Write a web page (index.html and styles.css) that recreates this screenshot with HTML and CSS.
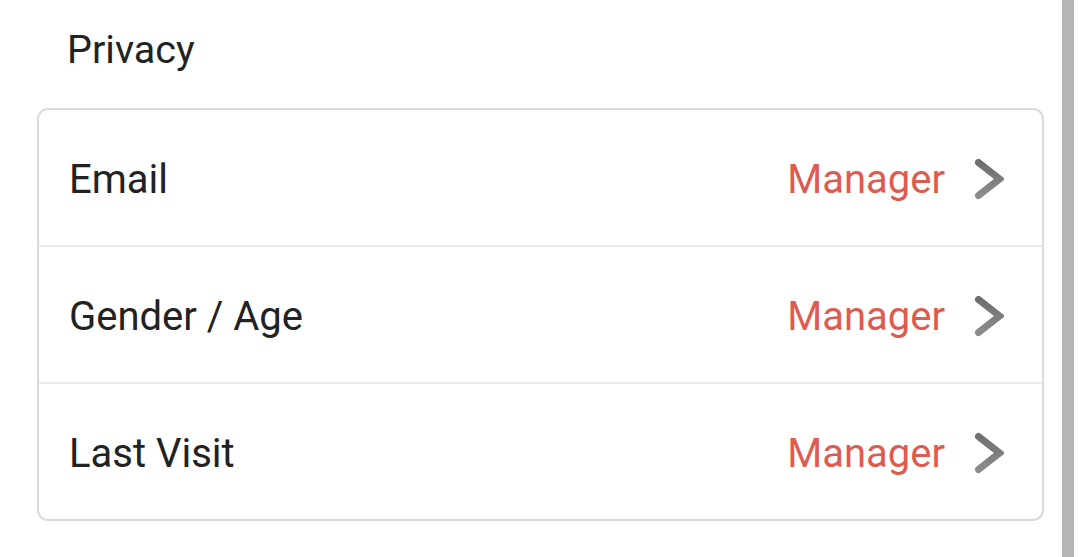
FILE: index.html
```html
<!DOCTYPE html>
<html>
<head>
<meta charset="utf-8">
<link rel="stylesheet" href="styles.css">
</head>
<body>
<div class="page">
  <main class="content">
    <h2 class="section-title">Privacy</h2>
    <div class="card">
      <div class="row">
        <span class="label">Email</span>
        <span class="action">Manager</span>
        <svg class="chev" viewBox="0 0 30 42" width="30" height="42"><defs><linearGradient id="cg" x1="0" y1="0" x2="0" y2="1"><stop offset="0" stop-color="#6e6e6e"/><stop offset="1" stop-color="#8c8c8c"/></linearGradient></defs><polyline points="4.5,4.5 25.5,21 4.5,37.5" fill="none" stroke="url(#cg)" stroke-width="7" stroke-linecap="round" stroke-linejoin="miter"/></svg>
      </div>
      <div class="row">
        <span class="label">Gender / Age</span>
        <span class="action">Manager</span>
        <svg class="chev" viewBox="0 0 30 42" width="30" height="42"><polyline points="4.5,4.5 25.5,21 4.5,37.5" fill="none" stroke="url(#cg)" stroke-width="7" stroke-linecap="round" stroke-linejoin="miter"/></svg>
      </div>
      <div class="row">
        <span class="label">Last Visit</span>
        <span class="action">Manager</span>
        <svg class="chev" viewBox="0 0 30 42" width="30" height="42"><polyline points="4.5,4.5 25.5,21 4.5,37.5" fill="none" stroke="url(#cg)" stroke-width="7" stroke-linecap="round" stroke-linejoin="miter"/></svg>
      </div>
    </div>
  </main>
  <div class="scrollbar"></div>
</div>
</body>
</html>
```
FILE: styles.css
```css
html, body {
  margin: 0;
  padding: 0;
  background: #ffffff;
}
body {
  font-family: Roboto, "Noto Sans", sans-serif;
  color: #222222;
}
.page {
  display: flex;
  width: 1080px;
  height: 557px;
  overflow: hidden;
}
.content {
  width: 1007px;
  padding: 25px 0 0 37px;
}
.section-title {
  margin: 0 0 0 30px;
  font-weight: 400;
  font-size: 39.5px;
  line-height: 50px;
  color: #222222;
}
.card {
  margin-top: 33px;
  border: 2px solid #dadada;
  border-radius: 11px;
  overflow: hidden;
}
.row {
  box-sizing: border-box;
  display: flex;
  align-items: center;
  height: 135px;
  padding: 3px 38px 0 30px;
}
.row + .row {
  height: 137px;
  border-top: 2px solid #ebebeb;
}
.label {
  flex: 1;
  font-size: 40px;
  color: #222222;
}
.action {
  font-size: 40px;
  color: #de5b50;
}
.chev {
  margin-left: 29px;
  display: block;
}
.scrollbar {
  margin-left: 18px;
  width: 12px;
  height: 557px;
  background: #b5b5b5;
}
```
